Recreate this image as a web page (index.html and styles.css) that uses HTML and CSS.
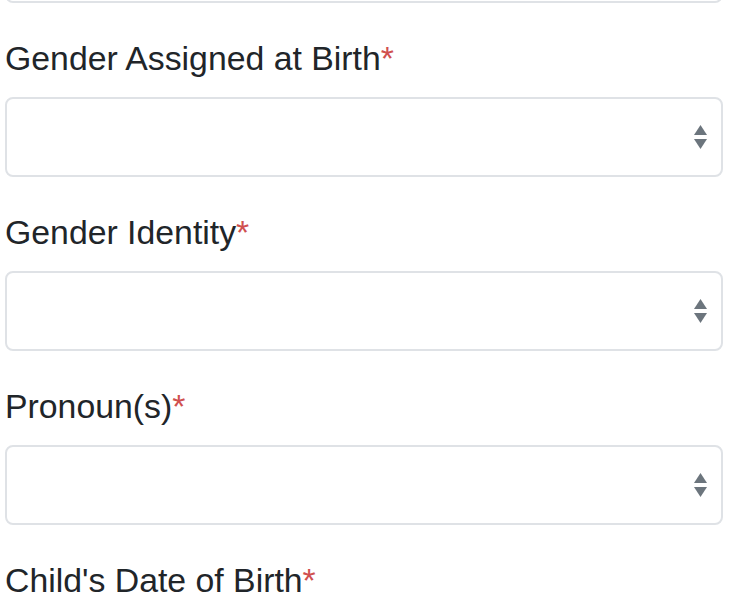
FILE: index.html
```html
<!DOCTYPE html>
<html lang="en">
<head>
<meta charset="utf-8">
<title>Form</title>
<link rel="stylesheet" href="styles.css">
</head>
<body>
<form class="form">
  <div class="group group-prev">
    <div class="control"></div>
  </div>
  <div class="group">
    <label class="label">Gender Assigned at Birth<span class="req">*</span></label>
    <div class="control select">
      <svg class="caret" width="13" height="24" viewBox="0 0 13 24"><polygon points="0,10 6.5,0 13,10"/><polygon points="0,14 13,14 6.5,24"/></svg>
    </div>
  </div>
  <div class="group">
    <label class="label">Gender Identity<span class="req">*</span></label>
    <div class="control select">
      <svg class="caret" width="13" height="24" viewBox="0 0 13 24"><polygon points="0,10 6.5,0 13,10"/><polygon points="0,14 13,14 6.5,24"/></svg>
    </div>
  </div>
  <div class="group">
    <label class="label">Pronoun(s)<span class="req">*</span></label>
    <div class="control select">
      <svg class="caret" width="13" height="24" viewBox="0 0 13 24"><polygon points="0,10 6.5,0 13,10"/><polygon points="0,14 13,14 6.5,24"/></svg>
    </div>
  </div>
  <div class="group">
    <label class="label">Child's Date of Birth<span class="req">*</span></label>
    <div class="control"></div>
  </div>
</form>
</body>
</html>
```
FILE: styles.css
```css
html, body {
  margin: 0;
  padding: 0;
  background: #ffffff;
  overflow: hidden;
}
body {
  font-family: "Liberation Sans", Arial, sans-serif;
  color: #212529;
}
.form {
  display: flex;
  flex-direction: column;
  padding: 0 6px 0 5px;
}
.group {
  display: flex;
  flex-direction: column;
  margin-bottom: 35px;
}
.group-prev {
  margin-top: -77px;
}
.label {
  font-size: 33.8px;
  line-height: 40px;
  margin-bottom: 19px;
  color: #212529;
}
.req {
  color: #d0504f;
}
.control {
  box-sizing: border-box;
  height: 80px;
  border: 2px solid #dfe2e6;
  border-radius: 8px;
  background: #ffffff;
}
.select {
  display: flex;
  align-items: center;
  justify-content: flex-end;
  padding-right: 14px;
}
.caret {
  fill: #6c757d;
  display: block;
}
```
